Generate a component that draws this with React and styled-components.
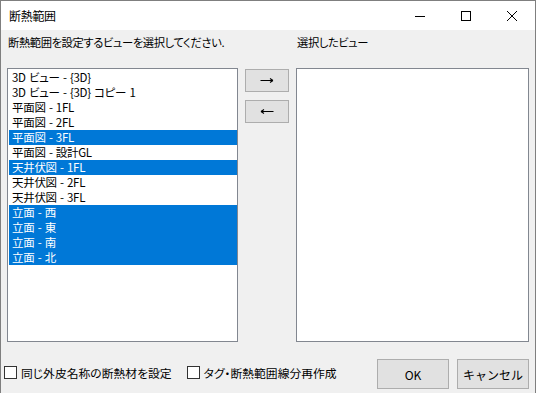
import React, { useState } from "react";
import styled, { createGlobalStyle } from "styled-components";

const GlobalStyle = createGlobalStyle`
  html, body {
    margin: 0;
    padding: 0;
    background: #f0f0f0;
  }
  body {
    font-family: "Noto Sans CJK JP", "Liberation Sans", sans-serif;
    font-size: 11.5px;
    letter-spacing: -0.3px;
    color: #000;
  }
`;

// list data
const initialViews = [
  { name: "3D ビュー - {3D}", selected: false },
  { name: "3D ビュー - {3D} コピー 1", selected: false },
  { name: "平面図 - 1FL", selected: false },
  { name: "平面図 - 2FL", selected: false },
  { name: "平面図 - 3FL", selected: true },
  { name: "平面図 - 設計GL", selected: false },
  { name: "天井伏図 - 1FL", selected: true },
  { name: "天井伏図 - 2FL", selected: false },
  { name: "天井伏図 - 3FL", selected: false },
  { name: "立面 - 西", selected: true },
  { name: "立面 - 東", selected: true },
  { name: "立面 - 南", selected: true },
  { name: "立面 - 北", selected: true },
];

function ArrowIcon({ left }) {
  return (
    <svg width="14" height="7" viewBox="0 0 14 7">
      {left ? (
        <path d="M1 3.5H13.5M1 3.5L4 1.5M1 3.5L4 5.5" stroke="#000" strokeWidth="1.1" fill="none" />
      ) : (
        <path d="M0.5 3.5H13M13 3.5L10 1.5M13 3.5L10 5.5" stroke="#000" strokeWidth="1.1" fill="none" />
      )}
    </svg>
  );
}

function App() {
  const [views, setViews] = useState(initialViews);
  const [sameSkin, setSameSkin] = useState(false);
  const [rebuild, setRebuild] = useState(false);

  const toggle = (i) => {
    const next = [...views];
    next[i] = { ...next[i], selected: !next[i].selected };
    setViews(next);
  };

  return (
    <>
      <GlobalStyle />
      <Window>
        {/* title bar */}
        <TitleBar>
          <Title>断熱範囲</Title>
          <Controls>
            <Control>
              <svg width="10" height="10" viewBox="0 0 10 10">
                <path d="M0 5.5H10" stroke="#000" strokeWidth="1" />
              </svg>
            </Control>
            <Control>
              <svg width="10" height="10" viewBox="0 0 10 10">
                <rect x="0.5" y="0.5" width="9" height="9" stroke="#000" strokeWidth="1" fill="none" />
              </svg>
            </Control>
            <Control>
              <svg width="10" height="10" viewBox="0 0 10 10">
                <path d="M0 0L10 10M10 0L0 10" stroke="#000" strokeWidth="1" />
              </svg>
            </Control>
          </Controls>
        </TitleBar>

        {/* labels */}
        <Labels>
          <Label>断熱範囲を設定するビューを選択してください.</Label>
          <Label>選択したビュー</Label>
        </Labels>

        {/* lists and move buttons */}
        <Main>
          <ListBox>
            {views.map((v, i) => (
              <Item key={i} $selected={v.selected} onClick={() => toggle(i)}>
                {v.name}
              </Item>
            ))}
          </ListBox>
          <MoveButtons>
            <SmallButton>
              <ArrowIcon />
            </SmallButton>
            <SmallButton>
              <ArrowIcon left />
            </SmallButton>
          </MoveButtons>
          <ListBox />
        </Main>

        {/* footer */}
        <Footer>
          <Options>
            <Option onClick={() => setSameSkin(!sameSkin)}>
              <Box>{sameSkin && "✓"}</Box>
              <span>同じ外皮名称の断熱材を設定</span>
            </Option>
            <Option onClick={() => setRebuild(!rebuild)}>
              <Box>{rebuild && "✓"}</Box>
              <span>タグ・断熱範囲線分再作成</span>
            </Option>
          </Options>
          <Actions>
            <Button>OK</Button>
            <Button>キャンセル</Button>
          </Actions>
        </Footer>
      </Window>
    </>
  );
}

const Window = styled.div`
  width: 536px;
  height: 393px;
  box-sizing: border-box;
  border: 1px solid #7f7f7f;
  border-bottom: none;
  background: #f0f0f0;
  display: flex;
  flex-direction: column;
  overflow: hidden;
  font-feature-settings: "palt";
`;

const TitleBar = styled.div`
  height: 29px;
  background: #fff;
  display: flex;
  align-items: center;
  justify-content: space-between;
`;

const Title = styled.div`
  padding-left: 8px;
  font-size: 12px;
  line-height: 15px;
  padding-bottom: 1px;
`;

const Controls = styled.div`
  display: flex;
  height: 100%;
`;

const Control = styled.div`
  width: 46px;
  height: 100%;
  display: flex;
  align-items: center;
  justify-content: center;
  svg {
    display: block;
  }
`;

const Labels = styled.div`
  display: grid;
  grid-template-columns: 289px 1fr;
  padding: 0 6px;
  margin-top: 5px;
  height: 15px;
  line-height: 15px;
  font-size: 11.3px;
  letter-spacing: -0.4px;
`;

const Label = styled.div`
  padding-left: 1px;
  white-space: nowrap;
`;

const Main = styled.div`
  display: grid;
  grid-template-columns: 231px 44px 233px;
  column-gap: 7px;
  padding: 0 6px;
  margin-top: 18px;
  height: 274px;
`;

const ListBox = styled.div`
  box-sizing: border-box;
  border: 1px solid #828790;
  background: #fff;
  padding: 1px 0 0 1px;
  display: flex;
  flex-direction: column;
`;

const Item = styled.div`
  height: 15px;
  line-height: 15px;
  padding-left: 3px;
  white-space: nowrap;
  word-spacing: 1px;
  cursor: default;
  background: ${(p) => (p.$selected ? "#0078d7" : "transparent")};
  color: ${(p) => (p.$selected ? "#fff" : "#000")};
`;

const MoveButtons = styled.div`
  display: flex;
  flex-direction: column;
  gap: 8px;
  padding-top: 1px;
`;

const SmallButton = styled.button`
  box-sizing: border-box;
  height: 23px;
  width: 44px;
  padding: 0;
  border: 1px solid #adadad;
  background: #e1e1e1;
  display: flex;
  align-items: center;
  justify-content: center;
  svg {
    display: block;
  }
`;

const Footer = styled.div`
  display: flex;
  align-items: center;
  justify-content: space-between;
  padding: 0 6px 0 3px;
  margin-top: 17px;
  height: 30px;
`;

const Options = styled.div`
  display: flex;
  align-items: center;
  gap: 15px;
  margin-bottom: 3px;
  font-size: 11.8px;
  letter-spacing: 0;
`;

const Option = styled.label`
  display: flex;
  align-items: center;
  gap: 4px;
  white-space: nowrap;
  line-height: 15px;
`;

const Box = styled.span`
  box-sizing: border-box;
  width: 13px;
  height: 13px;
  border: 1px solid #333;
  background: #fff;
  font-size: 10px;
  line-height: 11px;
  text-align: center;
`;

const Actions = styled.div`
  display: flex;
  gap: 8px;
`;

const Button = styled.button`
  box-sizing: border-box;
  width: 72px;
  height: 30px;
  border: 1px solid #adadad;
  background: #e1e1e1;
  font-family: inherit;
  font-size: 12px;
  letter-spacing: 0;
  color: #000;
  padding: 0;
`;

export default App;
